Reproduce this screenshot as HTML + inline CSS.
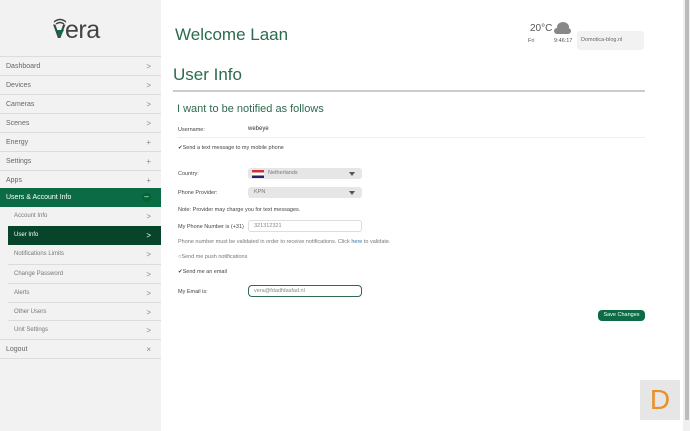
<!DOCTYPE html>
<html><head><style>
*{margin:0;padding:0;box-sizing:border-box}
body{width:690px;height:431px;overflow:hidden;background:#fff;font-family:"Liberation Sans",sans-serif;position:relative}
#sb{position:absolute;left:0;top:0;width:161px;height:431px;background:#f2f2f2}
.it{position:absolute;left:0;width:161px;height:19px;border-top:1px solid #dcdcdc;font-size:7px;color:#666;line-height:19px;padding-left:6px}
.it span{position:absolute;right:10px;top:0;color:#888;font-size:8px}
.sub{left:8px;width:153px;padding-left:6px;font-size:6px;color:#777}
.t{position:absolute;color:#555}
.lab{position:absolute;left:178px;font-size:5.5px;color:#444}
.sel{position:absolute;left:248px;width:114px;height:11px;background:#e6e6e6;border-radius:3px;font-size:5.5px;color:#777;line-height:11px;padding-left:20px}
.sel:after{content:"";position:absolute;right:7px;top:4px;border:3px solid transparent;border-top:4px solid #555}
.in{position:absolute;left:248px;width:114px;height:12px;border:1px solid #ddd;border-radius:3px;font-size:5.5px;color:#888;line-height:10px;padding-left:5px}
</style></head><body>
<div id="sb">
<div style="position:absolute;left:53px;top:16px;font-size:25px;color:#444;letter-spacing:-0.5px">vera</div>
<svg style="position:absolute;left:53px;top:18px" width="14" height="10" viewBox="0 0 14 10"><path d="M1 4Q7-1 13 4M3 6Q7 3 11 6" stroke="#444" stroke-width="1.4" fill="none"/></svg>
<div style="position:absolute;left:56px;top:30px;width:0;height:0;border-left:4px solid transparent;border-right:4px solid transparent;border-top:7px solid #0b6b45"></div>
<div class="it" style="top:56px">Dashboard<span>&gt;</span></div>
<div class="it" style="top:75px">Devices<span>&gt;</span></div>
<div class="it" style="top:94px">Cameras<span>&gt;</span></div>
<div class="it" style="top:113px">Scenes<span>&gt;</span></div>
<div class="it" style="top:132px">Energy<span>+</span></div>
<div class="it" style="top:151px">Settings<span>+</span></div>
<div class="it" style="top:170px">Apps<span>+</span></div>
<div class="it" style="top:188px;background:#0b6b45;color:#fff;border:0">Users &amp; Account Info<span style="color:#fff;background:#063;border-radius:4px;width:9px;height:9px;top:5px;line-height:8px;text-align:center">–</span></div>
<div class="it sub" style="top:207px;border:0">Account Info<span>&gt;</span></div>
<div class="it sub" style="top:226px;background:#07452b;color:#fff;border:0">User Info<span style="color:#fff">&gt;</span></div>
<div class="it sub" style="top:245px;border:0">Notifications Limits<span>&gt;</span></div>
<div class="it sub" style="top:264px">Change Password<span>&gt;</span></div>
<div class="it sub" style="top:283px">Alerts<span>&gt;</span></div>
<div class="it sub" style="top:302px">Other Users<span>&gt;</span></div>
<div class="it sub" style="top:320px">Unit Settings<span>&gt;</span></div>
<div class="it" style="top:339px">Logout<span>×</span></div>
<div class="it" style="top:358px;height:1px"></div>
</div>
<div class="t" style="left:175px;top:25px;font-size:17px;color:#2d6b4f">Welcome Laan</div>
<div class="t" style="left:530px;top:23px;font-size:10px">20°C</div>
<svg style="position:absolute;left:553px;top:21px" width="19" height="13"><ellipse cx="10" cy="6" rx="6" ry="5" fill="#888"/><rect x="1" y="7" width="17" height="6" rx="3" fill="#888"/></svg>
<div class="t" style="left:528px;top:38px;font-size:5.5px">Fri</div>
<div class="t" style="left:554px;top:38px;font-size:5.5px">9:46:17</div>
<div style="position:absolute;left:577px;top:31px;width:67px;height:19px;background:#f2f2f2;border-radius:3px;font-size:5.5px;color:#666;line-height:19px;padding-left:4px">Domotica-blog.nl</div>
<div class="t" style="left:173px;top:65px;font-size:17px;color:#2d6b4f">User Info</div>
<div style="position:absolute;left:173px;top:90px;width:472px;height:2px;background:#ccc"></div>
<div class="t" style="left:177px;top:103px;font-size:11px;color:#2d6b4f">I want to be notified as follows</div>
<div class="lab" style="top:127px">Username:</div>
<div class="t" style="left:248px;top:126px;font-size:6px;color:#333">webeye</div>
<div style="position:absolute;left:177px;top:137px;width:468px;height:1px;background:#eee"></div>
<div class="lab" style="top:145px">✔Send a text message to my mobile phone</div>
<div class="lab" style="top:171px">Country:</div>
<div class="sel" style="top:168px">Netherlands</div>
<div style="position:absolute;left:252px;top:170px;width:12px;height:8px;background:linear-gradient(#c33 33%,#fff 33% 66%,#226 66%)"></div>
<div class="lab" style="top:190px">Phone Provider:</div>
<div class="sel" style="top:187px;padding-left:6px">KPN</div>
<div class="lab" style="top:207px">Note: Provider may charge you for text messages.</div>
<div class="lab" style="top:224px">My Phone Number is (+31)</div>
<div class="in" style="top:220px">321312321</div>
<div class="lab" style="top:239px;color:#777">Phone number must be validated in order to receive notifications. Click <span style="color:#37a">here</span> to validate.</div>
<div class="lab" style="top:254px;color:#777">○Send me push notifications</div>
<div class="lab" style="top:269px">✔Send me an email</div>
<div class="lab" style="top:289px">My Email is:</div>
<div class="in" style="top:285px;border-color:#2d6b4f;border-radius:4px">vera@fdadfdasfad.nl</div>
<div style="position:absolute;left:598px;top:310px;width:47px;height:11px;background:#0b6b45;border-radius:4px;color:#fff;font-size:5.5px;line-height:11px;text-align:center">Save Changes</div>
<div style="position:absolute;left:640px;top:380px;width:40px;height:40px;background:#e6e6e6;color:#e8902a;font-size:28px;line-height:40px;text-align:center">D</div>
<div style="position:absolute;left:683px;top:0;width:7px;height:431px;background:#f0f0f0"><div style="margin:0 auto;width:4px;height:420px;background:#bbb"></div></div>
</body></html>
